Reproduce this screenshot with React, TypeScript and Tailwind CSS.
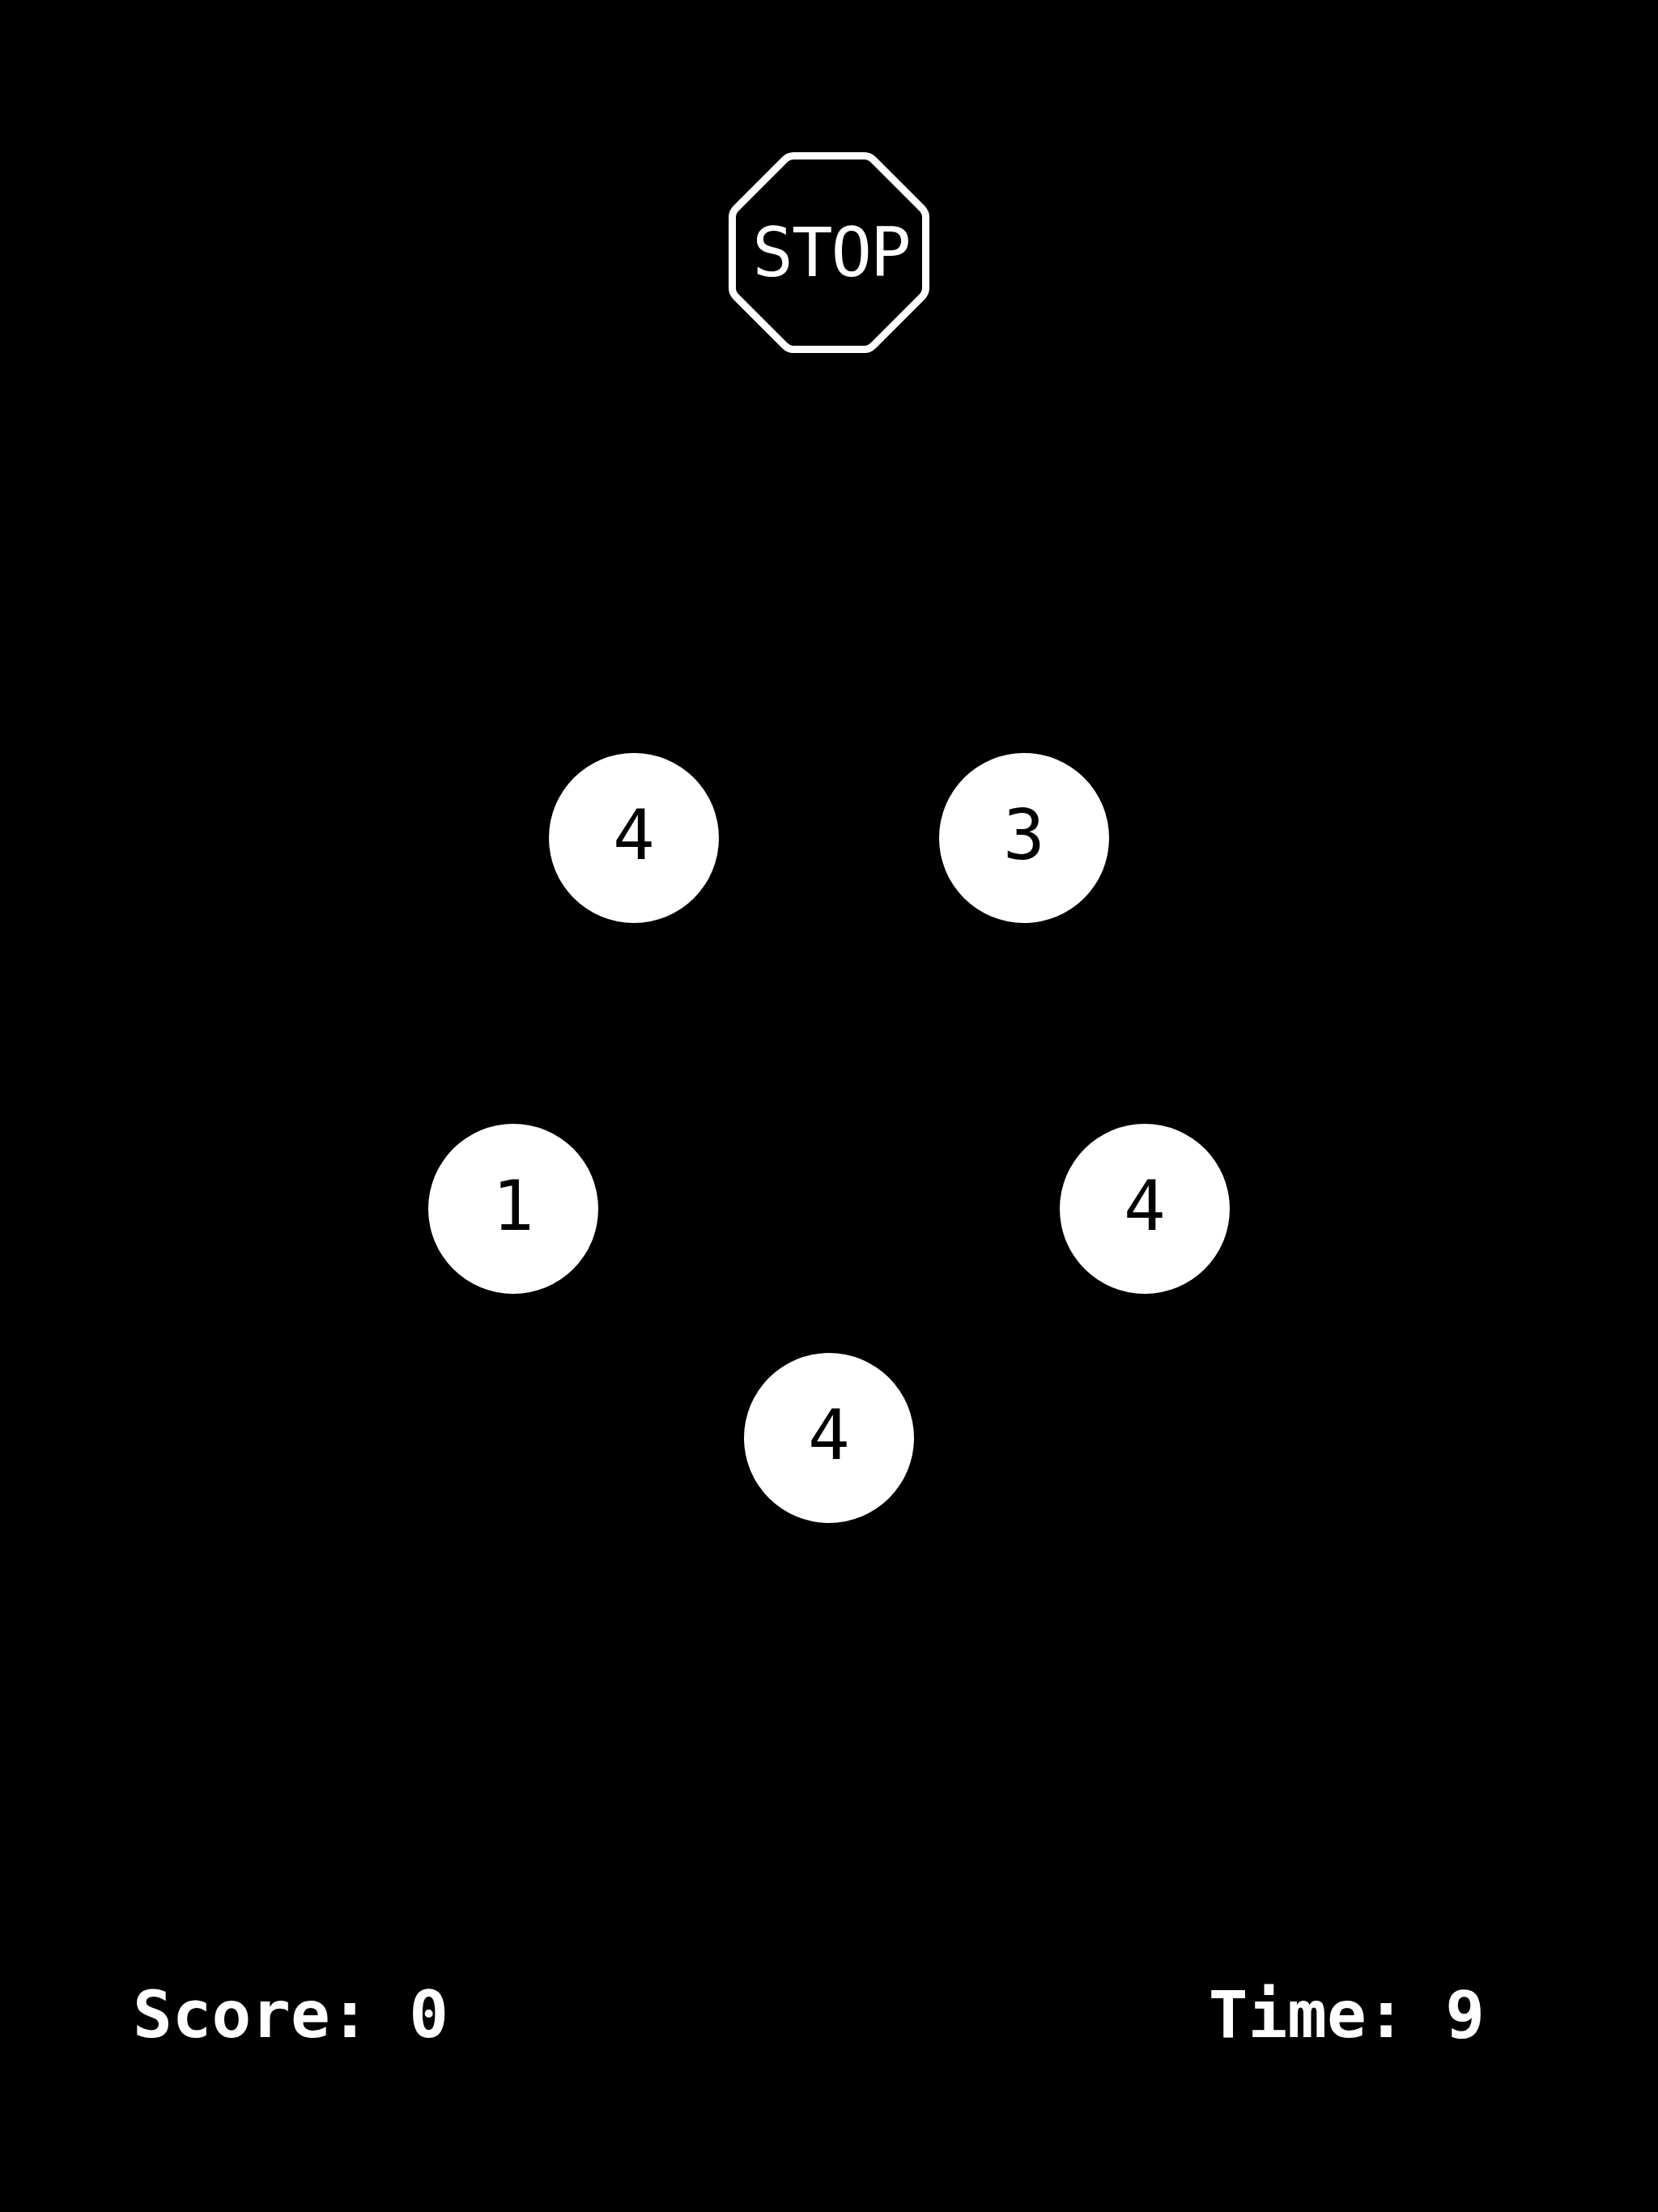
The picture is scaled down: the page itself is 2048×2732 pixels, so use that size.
const MONO = "font-['DejaVu_Sans_Mono',monospace]";

function StopSign() {
  return (
    <div className="relative h-[248px] w-[248px]">
      <svg viewBox="0 0 248 248" className="h-full w-full" fill="none" stroke="#fff" strokeWidth={9}>
        <path d="M80 4.5 H168 Q174 4.5 179 9.500 L238.500 69 Q243.500 74 243.500 80 V168 Q243.500 174 238.500 179 L179 238.500 Q174 243.500 168 243.500 H80 Q74 243.500 69 238.500 L9.500 179 Q4.500 174 4.500 168 V80 Q4.500 74 9.500 69 L69 9.500 Q74 4.500 80 4.500 Z" />
      </svg>
      <span className={`absolute inset-0 flex items-center justify-center pl-[5px] text-[84px] leading-none tracking-[-2px] text-white ${MONO}`}>
        STOP
      </span>
    </div>
  );
}

function Bubble({ value }: { value: number }) {
  return (
    <div
      className={`flex h-[210px] w-[210px] items-center justify-center rounded-full bg-white pb-[9px] text-[86px] leading-none text-black ${MONO}`}
    >
      {value}
    </div>
  );
}

export default function App() {
  return (
    <div className="flex h-[2732px] w-[2048px] flex-col items-center overflow-hidden bg-black pt-[188px]">
      <StopSign />
      <div className="mt-[494px] flex gap-[272px]">
        <Bubble value={4} />
        <Bubble value={3} />
      </div>
      <div className="mt-[248px] flex gap-[570px]">
        <Bubble value={1} />
        <Bubble value={4} />
      </div>
      <div className="mt-[73px] flex">
        <Bubble value={4} />
      </div>
      <div
        className={`mt-[567px] flex w-full justify-between pr-[214px] pl-[164px] text-[81px] leading-none font-bold whitespace-pre text-white ${MONO}`}
      >
        <span>Score: 0</span>
        <span>Time: 9</span>
      </div>
    </div>
  );
}
